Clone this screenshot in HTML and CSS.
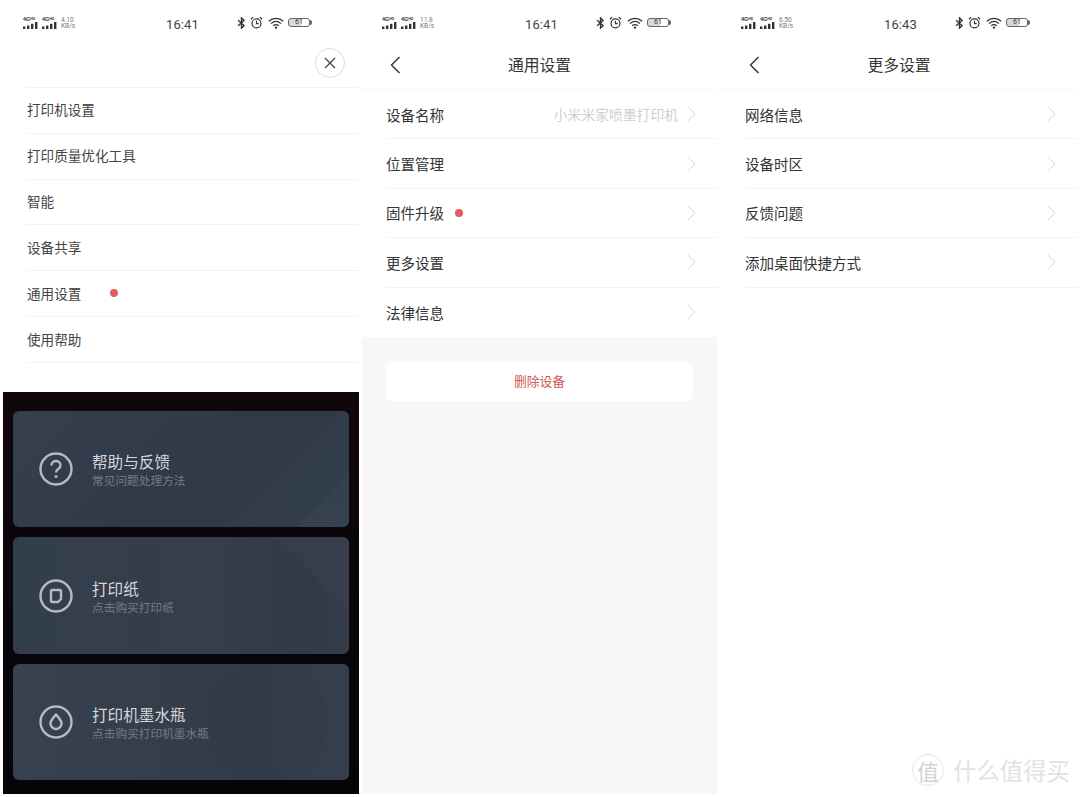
FILE: index.html
```html
<!DOCTYPE html>
<html lang="en">
<head>
  <meta charset="UTF-8" />
  <title>打印机设置</title>
  <link rel="stylesheet" href="styles.css">
</head>
<body>

  <svg class="sprites" width="0" height="0">
    <symbol id="bars" viewBox="0 0 15 7">
      <rect x="0" y="4.500" width="2.400" height="2.500"/>
      <rect x="4" y="3.500" width="2.400" height="3.500"/>
      <rect x="8" y="1.800" width="2.400" height="5.200"/>
      <rect x="12" y="0" width="2.400" height="7"/>
    </symbol>
    <symbol id="bt" viewBox="0 0 10 14">
      <path d="M1 3.800 8 10 5 13V1l3 3-7 6.200" fill="none" stroke="#333" stroke-width="1.600"/>
    </symbol>
    <symbol id="alarm" viewBox="0 0 14 14">
      <circle cx="7" cy="8" r="4.800" fill="none" stroke="#333" stroke-width="1.300"/>
      <path d="M7 5v3.200h2.400M1 3.500 3.500 1.200M13 3.500 10.500 1.200" fill="none" stroke="#333" stroke-width="1.300"/>
    </symbol>
    <symbol id="wifi" viewBox="0 0 16 12">
      <path d="M.8 4.300c4.200-3.800 10.200-3.800 14.400 0M3 6.600c3-2.600 7-2.600 10 0M5.200 8.800c1.700-1.400 3.900-1.400 5.600 0" fill="none" stroke="#333" stroke-width="1.200"/>
      <circle cx="8" cy="10.600" r="1.200" fill="#333"/>
    </symbol>
    <symbol id="chevron" viewBox="0 0 9 16">
      <path d="M1 1l7 7-7 7" fill="none" stroke="#d6d6d6" stroke-width="1"/>
    </symbol>
    <symbol id="back" viewBox="0 0 11 18">
      <path d="M9.500 1 1.500 9l8 8" fill="none" stroke="#333" stroke-width="1.400"/>
    </symbol>
  </svg>

  <div class="screen screen-menu">
    <div class="status">
      <div class="signal">
        <div class="sim"><span>4G<sup>HD</sup></span><svg><use href="#bars"/></svg></div>
        <div class="sim"><span>4G<sup>HD</sup></span><svg><use href="#bars"/></svg></div>
        <div class="speed">4.10<br>KB/s</div>
      </div>
      <div class="time">16:41</div>
      <div class="icons">
        <svg class="i-bt"><use href="#bt"/></svg>
        <svg class="i-alarm"><use href="#alarm"/></svg>
        <svg class="i-wifi"><use href="#wifi"/></svg>
        <div class="battery"><span>61</span></div>
      </div>
    </div>

    <div class="close-row">
      <div class="close">
        <svg width="12" height="12" viewBox="0 0 12 12"><path d="M1 1l10 10M11 1 1 11" stroke="#444" stroke-width="1.300"/></svg>
      </div>
    </div>

    <ul class="menu">
      <li>打印机设置</li>
      <li>打印质量优化工具</li>
      <li>智能</li>
      <li>设备共享</li>
      <li>通用设置<i class="dot dot-menu"></i></li>
      <li>使用帮助</li>
    </ul>

    <div class="shop">
      <div class="card card-help">
        <svg class="card-icon" viewBox="0 0 34 34">
          <circle cx="17" cy="17" r="15.500"/>
          <path d="M12.500 13.500c0-6 9-6 9 0 0 3.500-4.500 3.500-4.500 7"/>
          <circle class="fill" cx="17" cy="24.500" r="1.500"/>
        </svg>
        <div class="card-text">
          <div class="card-title">帮助与反馈</div>
          <div class="card-sub">常见问题处理方法</div>
        </div>
      </div>
      <div class="card card-paper">
        <svg class="card-icon" viewBox="0 0 34 34">
          <circle cx="17" cy="17" r="15.500"/>
          <path d="M12 12.500a1.500 1.500 0 0 1 1.500-1.500h7a1.500 1.500 0 0 1 1.500 1.500v7.500l-3 3h-5.500a1.500 1.500 0 0 1-1.500-1.500z"/>
        </svg>
        <div class="card-text">
          <div class="card-title">打印纸</div>
          <div class="card-sub">点击购买打印纸</div>
        </div>
      </div>
      <div class="card card-ink">
        <svg class="card-icon" viewBox="0 0 34 34">
          <circle cx="17" cy="17" r="15.500"/>
          <path d="M17 9.500c3 3.500 5.500 6 5.500 9a5.500 5.500 0 0 1-11 0c0-3 2.500-5.500 5.500-9z"/>
        </svg>
        <div class="card-text">
          <div class="card-title">打印机墨水瓶</div>
          <div class="card-sub">点击购买打印机墨水瓶</div>
        </div>
      </div>
    </div>
  </div>

  <div class="screen screen-general">
    <div class="status">
      <div class="signal">
        <div class="sim"><span>4G<sup>HD</sup></span><svg><use href="#bars"/></svg></div>
        <div class="sim"><span>4G<sup>HD</sup></span><svg><use href="#bars"/></svg></div>
        <div class="speed">11.8<br>KB/s</div>
      </div>
      <div class="time">16:41</div>
      <div class="icons">
        <svg class="i-bt"><use href="#bt"/></svg>
        <svg class="i-alarm"><use href="#alarm"/></svg>
        <svg class="i-wifi"><use href="#wifi"/></svg>
        <div class="battery"><span>61</span></div>
      </div>
    </div>

    <div class="nav">
      <svg class="back"><use href="#back"/></svg>
      <div class="nav-title">通用设置</div>
    </div>

    <ul class="rows">
      <li><span>设备名称</span><em>小米米家喷墨打印机</em><svg class="chev"><use href="#chevron"/></svg></li>
      <li><span>位置管理</span><svg class="chev"><use href="#chevron"/></svg></li>
      <li><span>固件升级</span><i class="dot dot-row"></i><svg class="chev"><use href="#chevron"/></svg></li>
      <li><span>更多设置</span><svg class="chev"><use href="#chevron"/></svg></li>
      <li><span>法律信息</span><svg class="chev"><use href="#chevron"/></svg></li>
    </ul>

    <div class="grey">
      <div class="delete">删除设备</div>
    </div>
  </div>

  <div class="screen screen-more">
    <div class="status">
      <div class="signal">
        <div class="sim"><span>4G<sup>HD</sup></span><svg><use href="#bars"/></svg></div>
        <div class="sim"><span>4G<sup>HD</sup></span><svg><use href="#bars"/></svg></div>
        <div class="speed">6.50<br>KB/s</div>
      </div>
      <div class="time">16:43</div>
      <div class="icons">
        <svg class="i-bt"><use href="#bt"/></svg>
        <svg class="i-alarm"><use href="#alarm"/></svg>
        <svg class="i-wifi"><use href="#wifi"/></svg>
        <div class="battery"><span>61</span></div>
      </div>
    </div>

    <div class="nav">
      <svg class="back"><use href="#back"/></svg>
      <div class="nav-title">更多设置</div>
    </div>

    <ul class="rows rows-open">
      <li><span>网络信息</span><svg class="chev"><use href="#chevron"/></svg></li>
      <li><span>设备时区</span><svg class="chev"><use href="#chevron"/></svg></li>
      <li><span>反馈问题</span><svg class="chev"><use href="#chevron"/></svg></li>
      <li><span>添加桌面快捷方式</span><svg class="chev"><use href="#chevron"/></svg></li>
    </ul>
  </div>

  <div class="watermark">
    <div class="wm-logo">值</div>
    <div class="wm-text">什么值得买</div>
  </div>

</body>
</html>
```

FILE: styles.css
```css
* {
  box-sizing: border-box;
}

html, body {
  height: 797px;
}

body {
  margin: 0;
  padding-left: 3px;
  background: #fff;
  font-family: "Noto Sans CJK SC", "Noto Sans", sans-serif;
  color: #333;
  display: flex;
  align-items: flex-start;
  overflow: hidden;
  position: relative;
}

ul {
  list-style: none;
  margin: 0;
  padding: 0;
}

.sprites {
  position: absolute;
}

.screen {
  height: 794px;
  display: flex;
  flex-direction: column;
  flex-shrink: 0;
}

.screen-menu {
  width: 356px;
  margin-right: 3px;
}

.screen-general {
  width: 355px;
  margin-right: 4px;
}

.screen-more {
  width: 356px;
}

/* status bar */
.status {
  height: 45px;
  flex-shrink: 0;
  display: flex;
  align-items: center;
  padding: 2px 0 0 20px;
}

.signal {
  width: 143px;
  display: flex;
  gap: 4px;
  margin-top: -2px;
}

.sim {
  width: 15px;
  display: flex;
  flex-direction: column;
  color: #333;
}

.sim span {
  font: bold 5.500px/5px "Liberation Sans", sans-serif;
  white-space: nowrap;
}

.sim sup {
  font-size: 3.500px;
  vertical-align: 1.500px;
  line-height: 0;
}

.sim svg {
  width: 15px;
  height: 7px;
  fill: #333;
}

.speed {
  font: 6.500px/6px Roboto, sans-serif;
  color: #777;
}

.time {
  width: 71px;
  margin-top: 2px;
  font: 13px/16px Roboto, sans-serif;
  color: #444;
  letter-spacing: .1px;
}

.icons {
  display: flex;
  align-items: center;
  margin-top: -2px;
}

.i-bt {
  width: 9px;
  height: 12px;
  margin-right: 4px;
}

.i-alarm {
  width: 13px;
  height: 13px;
  margin-right: 5px;
}

.i-wifi {
  width: 16px;
  height: 12px;
  margin-right: 4px;
}

.battery {
  width: 22px;
  height: 9px;
  border: 1px solid #666;
  border-radius: 3px;
  display: flex;
  align-items: center;
  justify-content: center;
  position: relative;
  background: linear-gradient(90deg, #d8d8d8 0 62%, #fff 62%);
}

.battery::after {
  content: "";
  position: absolute;
  right: -3px;
  top: 1px;
  width: 2px;
  height: 5px;
  border-radius: 0 2px 2px 0;
  background: #666;
}

.battery span {
  font: 7px/7px Roboto, sans-serif;
  color: #333;
}

/* first screen */
.close-row {
  height: 43px;
  flex-shrink: 0;
  margin-left: 24px;
  border-bottom: 1px solid #f3f3f3;
  display: flex;
  justify-content: flex-end;
  padding: 3px 14px 0 0;
}

.close {
  width: 30px;
  height: 30px;
  border: 1px solid #ddd;
  border-radius: 50%;
  display: flex;
  align-items: center;
  justify-content: center;
}

.menu {
  margin-left: 24px;
  flex-shrink: 0;
}

.menu li {
  height: 45.830px;
  border-bottom: 1px solid #f3f3f3;
  padding-bottom: 2px;
  font-size: 13.600px;
  color: #444;
  display: flex;
  align-items: center;
}

.dot {
  width: 8px;
  height: 8px;
  border-radius: 50%;
  background: #e35f5f;
  flex-shrink: 0;
}

.dot-menu {
  margin-left: 29px;
}

.dot-row {
  margin-left: 11px;
}

.shop {
  margin-top: 29px;
  flex: 1;
  background: linear-gradient(180deg, #10070c 0%, #0a060b 50%, #050509 100%);
  padding: 19px 10px 14px;
  display: flex;
  flex-direction: column;
  gap: 10px;
}

.card {
  height: 116.500px;
  border-radius: 6px;
  display: flex;
  align-items: center;
  padding-left: 26px;
  gap: 19px;
}

.card-help {
  background:
    linear-gradient(135deg, transparent 0 88%, rgba(255, 255, 255, .02) 88%),
    linear-gradient(135deg, transparent 0 72%, rgba(255, 255, 255, .012) 72%),
    linear-gradient(135deg, #353f4d 0%, #2f3948 55%, #303b49 100%);
}

.card-paper {
  background:
    linear-gradient(45deg, transparent 0 84%, rgba(255, 255, 255, .02) 84%),
    linear-gradient(90deg, #333e4c 0%, #353e4b 60%, #303a48 85%, #343c49 100%);
}

.card-ink {
  background:
    radial-gradient(circle at 75% 50%, rgba(45, 55, 70, .3) 0 24%, transparent 24.500%),
    linear-gradient(90deg, #37414f 0%, #323c4a 60%, #343e4c 100%);
}

.card-icon {
  width: 34px;
  height: 34px;
  flex-shrink: 0;
  fill: none;
  stroke: #b8babd;
  stroke-width: 2.400;
}

.card-icon .fill {
  fill: #b8babd;
  stroke: none;
}

.card-text {
  margin-top: 3px;
}

.card-title {
  font-size: 15.600px;
  line-height: 18px;
  color: #d6d7d9;
}

.card-sub {
  font-size: 11.700px;
  line-height: 19px;
  color: #747b86;
}

/* settings screens */
.nav {
  height: 45px;
  flex-shrink: 0;
  position: relative;
  display: flex;
  align-items: center;
  justify-content: center;
  border-bottom: 1px solid #f6f6f6;
}

.back {
  position: absolute;
  left: 28px;
  top: 11px;
  width: 11px;
  height: 18px;
}

.nav-title {
  font-size: 15.800px;
  color: #333;
  margin-top: -5px;
}

.rows {
  flex-shrink: 0;
  margin-left: 24px;
}

.rows li {
  height: 49.400px;
  border-bottom: 1px solid #f3f3f3;
  display: flex;
  align-items: center;
  padding-right: 21px;
  font-size: 14.500px;
  color: #333;
}

.rows li:last-child {
  border-bottom: none;
}

.rows-open li:last-child {
  border-bottom: 1px solid #f3f3f3;
}

.rows em {
  margin-left: auto;
  font-style: normal;
  font-size: 13.800px;
  color: #cfcfcf;
}

.chev {
  width: 9px;
  height: 16px;
  margin-left: auto;
  flex-shrink: 0;
}

.rows em + .chev {
  margin-left: 9px;
}

.grey {
  flex: 1;
  background: #f7f7f7;
  padding: 25px 24px;
}

.delete {
  height: 39px;
  padding-bottom: 1px;
  background: #fff;
  border-radius: 6px;
  display: flex;
  align-items: center;
  justify-content: center;
  font-size: 12.800px;
  color: #cf5a50;
}

/* site watermark */
.watermark {
  position: absolute;
  left: 912px;
  top: 754px;
  display: flex;
  align-items: center;
  gap: 9px;
  color: #e2e2e2;
}

.wm-logo {
  width: 32px;
  height: 32px;
  border: 1px solid #e6e6e6;
  border-radius: 50%;
  display: flex;
  align-items: center;
  justify-content: center;
  font-size: 22px;
  color: #d4d4d4;
}

.wm-text {
  font-size: 23.400px;
  line-height: 32px;
}
```
